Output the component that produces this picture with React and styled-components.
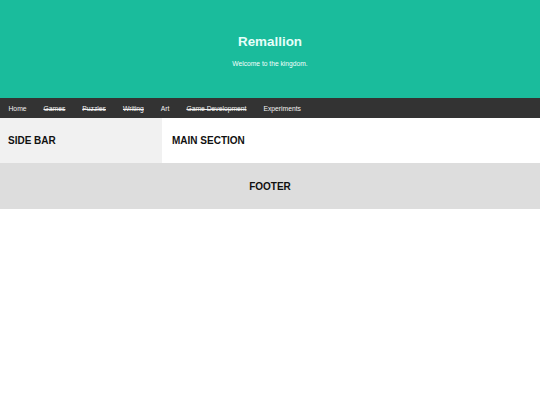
import styled, { createGlobalStyle } from "styled-components";

const GlobalStyle = createGlobalStyle`
  body {
    margin: 0;
    font-family: "Liberation Sans", Arial, sans-serif;
    background: #ffffff;
  }
  * {
    box-sizing: border-box;
  }
`;

const Header = styled.header`
  background-color: #1abc9c;
  height: 98px;
  padding-top: 34px;
  display: flex;
  flex-direction: column;
  align-items: center;
  color: #e6fffa;
  h1 {
    margin: 0;
    font-size: 13.4px;
    font-weight: bold;
    line-height: 16px;
  }
  p {
    margin: 9.6px 0 0 0;
    font-size: 6.7px;
    line-height: 8px;
    color: #f4fffc;
  }
`;

const NavBar = styled.nav`
  background-color: #333333;
  height: 20px;
  display: flex;
  align-items: center;
`;

const NavLink = styled.a`
  color: #f2f2f2;
  font-size: 6.75px;
  padding: 0 8.5px;
  text-decoration: ${(props) => (props.$struck ? "line-through" : "none")};
  cursor: pointer;
`;

const Row = styled.div`
  display: flex;
  height: 45px;
`;

const SideBar = styled.div`
  width: 30%;
  background-color: #f1f1f1;
  padding: 0 8px;
  display: flex;
  align-items: center;
`;

const MainSection = styled.div`
  flex: 1;
  background-color: #ffffff;
  padding: 0 10px;
  display: flex;
  align-items: center;
`;

const Heading = styled.h2`
  margin: 0;
  font-size: 10px;
  font-weight: bold;
  color: #111111;
`;

const Footer = styled.footer`
  background-color: #dddddd;
  height: 46px;
  display: flex;
  align-items: center;
  justify-content: center;
`;

const links = [
  { label: "Home" },
  { label: "Games", struck: true },
  { label: "Puzzles", struck: true },
  { label: "Writing", struck: true },
  { label: "Art" },
  { label: "Game Development", struck: true },
  { label: "Experiments" },
];

export default function App() {
  return (
    <>
      <GlobalStyle />
      <Header>
        <h1>Remallion</h1>
        <p>Welcome to the kingdom.</p>
      </Header>
      <NavBar>
        {links.map((link) => (
          <NavLink key={link.label} $struck={link.struck}>
            {link.label}
          </NavLink>
        ))}
      </NavBar>
      <Row>
        <SideBar>
          <Heading>SIDE BAR</Heading>
        </SideBar>
        <MainSection>
          <Heading>MAIN SECTION</Heading>
        </MainSection>
      </Row>
      <Footer>
        <Heading>FOOTER</Heading>
      </Footer>
    </>
  );
}
